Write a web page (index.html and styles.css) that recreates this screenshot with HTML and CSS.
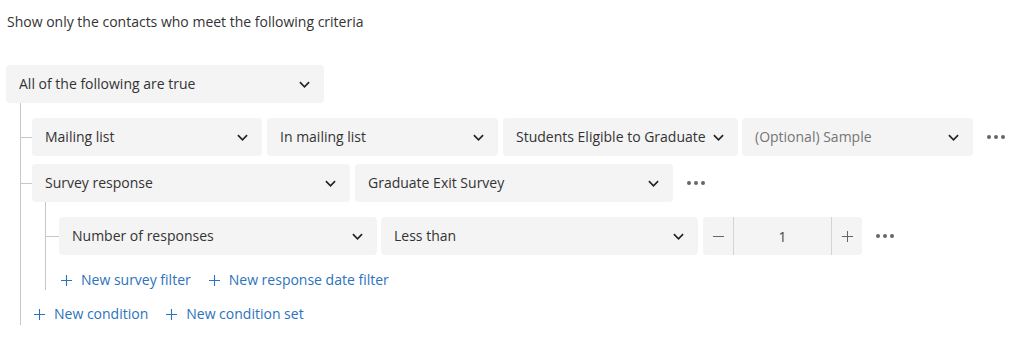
FILE: index.html
```html
<!DOCTYPE html>
<html lang="en">
<head>
<meta charset="utf-8">
<title>Contact filter</title>
<link rel="stylesheet" href="styles.css">
</head>
<body>
<div class="page">
  <p class="intro">Show only the contacts who meet the following criteria</p>

  <div class="select top-select">
    <span class="label">All of the following are true</span>
    <svg class="chev" viewBox="0 0 12 7"><path d="M1 1l5 5 5-5"/></svg>
  </div>

  <div class="tree">
    <div class="row">
      <span class="conn"></span>
      <div class="select w230"><span class="label">Mailing list</span><svg class="chev" viewBox="0 0 12 7"><path d="M1 1l5 5 5-5"/></svg></div>
      <div class="select w231"><span class="label">In mailing list</span><svg class="chev" viewBox="0 0 12 7"><path d="M1 1l5 5 5-5"/></svg></div>
      <div class="select w235 tight"><span class="label">Students Eligible to Graduate</span><svg class="chev" viewBox="0 0 12 7"><path d="M1 1l5 5 5-5"/></svg></div>
      <div class="select w231 gap4"><span class="label placeholder">(Optional) Sample</span><svg class="chev" viewBox="0 0 12 7"><path d="M1 1l5 5 5-5"/></svg></div>
      <span class="more"><i></i><i></i><i></i></span>
    </div>

    <div class="row row2">
      <span class="conn"></span>
      <div class="select w318"><span class="label">Survey response</span><svg class="chev" viewBox="0 0 12 7"><path d="M1 1l5 5 5-5"/></svg></div>
      <div class="select w318"><span class="label">Graduate Exit Survey</span><svg class="chev" viewBox="0 0 12 7"><path d="M1 1l5 5 5-5"/></svg></div>
      <span class="more"><i></i><i></i><i></i></span>
    </div>

    <div class="subtree">
      <div class="row">
        <span class="conn conn-sub"></span>
        <div class="select w318"><span class="label">Number of responses</span><svg class="chev" viewBox="0 0 12 7"><path d="M1 1l5 5 5-5"/></svg></div>
        <div class="select w317 gap4"><span class="label">Less than</span><svg class="chev" viewBox="0 0 12 7"><path d="M1 1l5 5 5-5"/></svg></div>
        <div class="stepper">
          <span class="step-btn"><svg viewBox="0 0 14 14"><path d="M1 7h12"/></svg></span>
          <span class="step-value">1</span>
          <span class="step-btn"><svg viewBox="0 0 14 14"><path d="M1 7h12M7 1v12"/></svg></span>
        </div>
        <span class="more"><i></i><i></i><i></i></span>
      </div>
      <div class="links sub-links">
        <a class="link"><svg viewBox="0 0 12 12"><path d="M0 6h12M6 0v12"/></svg>New survey filter</a>
        <a class="link"><svg viewBox="0 0 12 12"><path d="M0 6h12M6 0v12"/></svg>New response date filter</a>
      </div>
    </div>

    <div class="links main-links">
      <a class="link"><svg viewBox="0 0 12 12"><path d="M0 6h12M6 0v12"/></svg>New condition</a>
      <a class="link"><svg viewBox="0 0 12 12"><path d="M0 6h12M6 0v12"/></svg>New condition set</a>
    </div>
  </div>
</div>
</body>
</html>
```
FILE: styles.css
```css
html, body {
  margin: 0;
  padding: 0;
  background: #fff;
}

.page {
  padding: 12px 0 0 6px;
  font-family: "Open Sans", "Noto Sans", sans-serif;
  font-size: 14px;
  color: #333;
}

.intro {
  margin: 0 0 33px 1px;
  line-height: 20px;
}

.select {
  box-sizing: border-box;
  display: flex;
  align-items: center;
  height: 38px;
  padding: 0 14px 0 13px;
  background: #f4f4f4;
  border-radius: 4px;
  flex: none;
}

.select .label {
  flex: 1;
  white-space: nowrap;
  overflow: hidden;
  line-height: 20px;
  color: #333;
}

.select .placeholder {
  color: #757575;
}

.chev {
  width: 11px;
  height: 7px;
  flex: none;
  margin-left: 8px;
}

.chev path {
  fill: none;
  stroke: #222;
  stroke-width: 1.8;
}

.top-select {
  width: 318px;
  padding-left: 13px;
}

.tree {
  margin-left: 14px;
  border-left: 1px solid #c8c8c8;
  padding-top: 15px;
  width: 1000px;
}

.row {
  display: flex;
  align-items: center;
  gap: 5px;
}

.row2 {
  margin-top: 8px;
}

.conn {
  width: 11px;
  height: 1px;
  background: #c8c8c8;
  margin-right: -5px;
  flex: none;
}

.conn-sub {
  width: 13px;
}

.w230 { width: 230px; }
.w231 { width: 231px; }
.w235 { width: 235px; }
.w318 { width: 318px; }
.w317 { width: 317px; }
.gap4 { margin-left: -1px; }

.tight .chev {
  margin-left: 6px;
}

.more {
  display: flex;
  gap: 3px;
  margin-left: 9px;
  flex: none;
}

.more i {
  width: 4px;
  height: 4px;
  border-radius: 50%;
  background: #666;
}

.subtree {
  margin: 0 0 0 24px;
  border-left: 1px solid #c8c8c8;
  padding-top: 15px;
}

.stepper {
  display: flex;
  width: 159px;
  height: 38px;
  background: #f4f4f4;
  border-radius: 4px;
  flex: none;
}

.step-btn {
  width: 30px;
  display: flex;
  align-items: center;
  justify-content: center;
}

.step-btn svg {
  width: 13px;
  height: 13px;
}

.step-btn path {
  stroke: #666;
  stroke-width: 1.1;
  fill: none;
}

.step-value {
  flex: 1;
  display: flex;
  align-items: center;
  justify-content: center;
  border-left: 1px solid #d4d4d4;
  border-right: 1px solid #d4d4d4;
  color: #444;
}

.links {
  display: flex;
  gap: 18px;
  line-height: 20px;
}

.sub-links {
  padding: 15px 0 0 15px;
}

.main-links {
  padding: 14px 0 1px 13px;
}

.link {
  display: flex;
  align-items: center;
  color: #2b73bd;
  cursor: pointer;
}

.link svg {
  width: 11px;
  height: 11px;
  margin-right: 9px;
}

.link path {
  stroke: #2b73bd;
  stroke-width: 1.2;
  fill: none;
}
```
